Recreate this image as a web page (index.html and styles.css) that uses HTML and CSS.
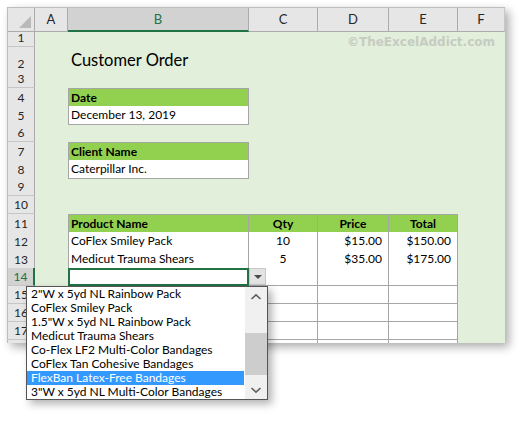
FILE: index.html
```html
<!DOCTYPE html>
<html>
<head>
<meta charset="utf-8">
<link rel="stylesheet" href="styles.css">
</head>
<body>
<div class="stage">
  <div class="sheet">
    <div class="row hdr">
      <div class="corner"><span class="tri"></span></div>
      <div class="ch">A</div>
      <div class="ch sel">B</div>
      <div class="ch">C</div>
      <div class="ch">D</div>
      <div class="ch">E</div>
      <div class="ch last">F</div>
    </div>
    <div class="row"><div class="rh">1</div><div></div><div></div><div></div><div></div><div></div><div></div></div>
    <div class="row tall"><div class="rh">2</div><div></div><div class="c title">Customer Order</div><div></div><div></div><div></div><div></div></div>
    <div class="row"><div class="rh">3</div><div></div><div></div><div></div><div></div><div></div><div></div></div>
    <div class="row"><div class="rh">4</div><div></div><div class="c g tl bl">Date</div><div></div><div></div><div></div><div></div></div>
    <div class="row"><div class="rh">5</div><div></div><div class="c w bl">December 13, 2019</div><div></div><div></div><div></div><div></div></div>
    <div class="row"><div class="rh">6</div><div></div><div></div><div></div><div></div><div></div><div></div></div>
    <div class="row"><div class="rh">7</div><div></div><div class="c g tl bl">Client Name</div><div></div><div></div><div></div><div></div></div>
    <div class="row"><div class="rh">8</div><div></div><div class="c w bl">Caterpillar Inc.</div><div></div><div></div><div></div><div></div></div>
    <div class="row"><div class="rh">9</div><div></div><div></div><div></div><div></div><div></div><div></div></div>
    <div class="row"><div class="rh">10</div><div></div><div></div><div></div><div></div><div></div><div></div></div>
    <div class="row"><div class="rh">11</div><div></div><div class="c g tl bl">Product Name</div><div class="c g tl ctr">Qty</div><div class="c g tl ctr">Price</div><div class="c g tl ctr">Total</div><div></div></div>
    <div class="row"><div class="rh">12</div><div></div><div class="c w bl">CoFlex Smiley Pack</div><div class="c w ctr">10</div><div class="c w num">$15.00</div><div class="c w num">$150.00</div><div></div></div>
    <div class="row"><div class="rh">13</div><div></div><div class="c w bl">Medicut Trauma Shears</div><div class="c w ctr">5</div><div class="c w num">$35.00</div><div class="c w num">$175.00</div><div></div></div>
    <div class="row"><div class="rh active">14</div><div></div><div class="c w bl cur"></div><div class="c w"></div><div class="c w"></div><div class="c w"></div><div></div></div>
    <div class="row"><div class="rh">15</div><div></div><div class="c w bl"></div><div class="c w"></div><div class="c w"></div><div class="c w"></div><div></div></div>
    <div class="row"><div class="rh">16</div><div></div><div class="c w bl"></div><div class="c w"></div><div class="c w"></div><div class="c w"></div><div></div></div>
    <div class="row"><div class="rh">17</div><div></div><div class="c w bl"></div><div class="c w"></div><div class="c w"></div><div class="c w"></div><div></div></div>
    <div class="row"><div class="rh"></div><div></div><div class="c w bl"></div><div class="c w"></div><div class="c w"></div><div class="c w"></div><div></div></div>
  </div>

  <div class="watermark">©TheExcelAddict.com</div>

  <div class="ddbtn"><span class="ddtri"></span></div>

  <div class="list">
    <ul class="items">
      <li>2"W x 5yd NL Rainbow Pack</li>
      <li>CoFlex Smiley Pack</li>
      <li>1.5"W x 5yd NL Rainbow Pack</li>
      <li>Medicut Trauma Shears</li>
      <li>Co-Flex LF2 Multi-Color Bandages</li>
      <li>CoFlex Tan Cohesive Bandages</li>
      <li class="hi">FlexBan Latex-Free Bandages</li>
      <li>3"W x 5yd NL Multi-Color Bandages</li>
    </ul>
    <div class="sbar">
      <div class="sbtn"><svg width="12" height="8" viewBox="0 0 12 8"><polyline points="1.5,6 6,1.8 10.5,6" fill="none" stroke="#5f5f5f" stroke-width="1.6"/></svg></div>
      <div class="track"><div class="thumb"></div></div>
      <div class="sbtn"><svg width="12" height="8" viewBox="0 0 12 8"><polyline points="1.5,2 6,6.2 10.5,2" fill="none" stroke="#5f5f5f" stroke-width="1.6"/></svg></div>
    </div>
  </div>
</div>
</body>
</html>
```
FILE: styles.css
```css
* { box-sizing: border-box; }
html { height: 100%; }
html, body { margin: 0; padding: 0; background: #ffffff; }
body { min-height: 421px; padding: 7px; font-family: Lato, "Noto Sans", sans-serif; color: #000; }

.stage { position: relative; width: 498px; height: 400px; }

.sheet {
  width: 498px;
  height: 336px;
  overflow: hidden;
  background: #e2efda;
  border-top: 1px solid #bdbdbd;
  border-left: 1px solid #bdbdbd;
  box-shadow: 4px 4px 9px rgba(0, 0, 0, 0.33);
}

.row {
  display: grid;
  grid-template-columns: 27px 33px 181px 69px 71px 69px 47px;
  height: 18px;
}
.row.hdr { height: 21px; }
.row.tall { height: 23px; }

/* headers */
.corner {
  position: relative;
  background: #e6e6e6;
  border-right: 1px solid #ababab;
  border-bottom: 1px solid #ababab;
}
.tri {
  position: absolute;
  right: 3px;
  bottom: 3px;
  width: 0;
  height: 0;
  border-left: 12px solid transparent;
  border-bottom: 12px solid #b9b9b9;
}
.ch {
  background: #e6e6e6;
  border-right: 1px solid #ababab;
  border-bottom: 1px solid #ababab;
  font-size: 13px;
  line-height: 22px;
  text-align: center;
  color: #262626;
}
.ch.sel {
  background: #d2d2d2;
  color: #217346;
  border-bottom: 2px solid #217346;
}
.ch.last { border-right: 1px solid #c8c8c8; }

.rh {
  display: flex;
  align-items: flex-end;
  justify-content: center;
  background: #e6e6e6;
  border-right: 1px solid #ababab;
  border-bottom: 1px solid #c6c6c6;
  font-size: 12px;
  line-height: 17px;
  color: #262626;
}
.rh.active {
  background: #d2d2d2;
  color: #217346;
  border-right: 2px solid #217346;
}

/* cells */
.c {
  font-size: 12px;
  line-height: 18px;
  padding: 0 2px;
  white-space: nowrap;
}
.title {
  font-size: 16.5px;
  line-height: 26px;
  padding-left: 3px;
  overflow: visible;
}
.g {
  background: #92d050;
  font-weight: bold;
  border-right: 1px solid #a6a6a6;
  border-bottom: 1px solid #a6a6a6;
}
.w {
  background: #ffffff;
  border-right: 1px solid #a6a6a6;
  border-bottom: 1px solid #a6a6a6;
}
.tl { border-top: 1px solid #a6a6a6; line-height: 17px; }
.bl { border-left: 1px solid #a6a6a6; }
.ctr { text-align: center; }
.num { text-align: right; padding-right: 6px; }
.cur { outline: 2px solid #217346; outline-offset: -2px; }

/* overlays */
.watermark {
  position: absolute;
  left: 340px;
  top: 28px;
  font-family: "DejaVu Sans", sans-serif;
  font-weight: bold;
  font-size: 12px;
  line-height: 14px;
  color: #c6cbc3;
  white-space: nowrap;
}

.ddbtn {
  position: absolute;
  left: 242px;
  top: 261px;
  width: 17px;
  height: 17px;
  background: #e3e3e3;
  border: 1px solid #c8c8c8;
  display: flex;
  align-items: center;
  justify-content: center;
}
.ddtri {
  width: 0;
  height: 0;
  border-left: 4px solid transparent;
  border-right: 4px solid transparent;
  border-top: 4px solid #4a4a4a;
}

.list {
  position: absolute;
  left: 19px;
  top: 279px;
  width: 242px;
  height: 114px;
  display: flex;
  background: #ffffff;
  border: 1px solid #555555;
  box-shadow: 4px 4px 8px rgba(0, 0, 0, 0.3);
}
.items {
  flex: 1;
  margin: 0;
  padding: 0;
  list-style: none;
  font-family: Lato, sans-serif;
  font-size: 12px;
  color: #000;
}
.items li {
  height: 14px;
  line-height: 14px;
  padding-left: 4px;
  white-space: nowrap;
}
.items li.hi { background: #3399ff; color: #ffffff; }

.sbar {
  width: 22px;
  margin-left: 1px;
  display: flex;
  flex-direction: column;
  background: #f0f0f0;
}
.sbtn {
  height: 19px;
  display: flex;
  align-items: center;
  justify-content: center;
}
.track {
  flex: 1;
  position: relative;
}
.thumb {
  position: absolute;
  left: 0;
  right: 0;
  top: 27px;
  height: 42px;
  background: #cdcdcd;
}
```
